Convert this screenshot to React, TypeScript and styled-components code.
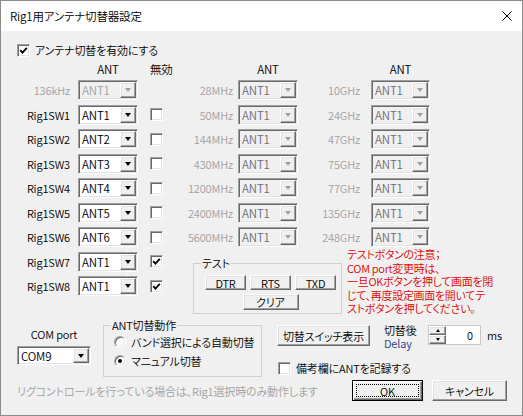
import styled, { createGlobalStyle, css } from "styled-components";

const GlobalStyle = createGlobalStyle`
  html, body { margin: 0; padding: 0; background: #f0f0f0; }
  body {
    font-family: "Noto Sans CJK JP", "Noto Sans", sans-serif;
    font-size: 11px;
    font-weight: 350;
    letter-spacing: -0.15px;
    color: #000;
    font-feature-settings: "palt";
  }
  *, *::before, *::after { box-sizing: border-box; }
`;

const sunken = css`
  border: 1px solid;
  border-color: #a0a0a0 #fff #fff #a0a0a0;
  box-shadow: inset 1px 1px 0 #696969, inset -1px -1px 0 #e3e3e3;
`;

const raised = css`
  border: 1px solid;
  border-color: #fff #696969 #696969 #fff;
  box-shadow: inset -1px -1px 0 #a0a0a0, inset 1px 1px 0 #e3e3e3;
`;

const swRows = [
  { label: "Rig1SW1", value: "ANT1", off: false },
  { label: "Rig1SW2", value: "ANT2", off: false },
  { label: "Rig1SW3", value: "ANT3", off: false },
  { label: "Rig1SW4", value: "ANT4", off: false },
  { label: "Rig1SW5", value: "ANT5", off: false },
  { label: "Rig1SW6", value: "ANT6", off: false },
  { label: "Rig1SW7", value: "ANT1", off: true },
  { label: "Rig1SW8", value: "ANT1", off: true },
];
const midBands = ["28MHz", "50MHz", "144MHz", "430MHz", "1200MHz", "2400MHz", "5600MHz"];
const highBands = ["10GHz", "24GHz", "47GHz", "75GHz", "77GHz", "135GHz", "248GHz"];

const Window = styled.div`
  width: 523px;
  height: 416px;
  border: 1px solid #8c8c8c;
  display: flex;
  flex-direction: column;
  background: #f0f0f0;
  overflow: hidden;
`;

const TitleBar = styled.div`
  height: 30px;
  flex: none;
  background: #fff;
  display: flex;
  align-items: center;
  justify-content: space-between;
  padding: 0 10px 0 9px;
`;

const Title = styled.span`
  font-size: 11.5px;
  line-height: 14px;
`;

const Body = styled.div`
  flex: 1;
  display: flex;
  flex-direction: column;
  padding: 0 15px 0 16px;
`;

const CheckRow = styled.label<{ $top?: number; $indent?: number }>`
  display: flex;
  align-items: center;
  gap: 5px;
  height: 14px;
  line-height: 14px;
  margin-top: ${(p) => p.$top ?? 0}px;
  margin-left: ${(p) => p.$indent ?? 0}px;
  white-space: nowrap;
`;

const CheckBoxFrame = styled.span`
  width: 13px;
  height: 13px;
  flex: none;
  background: #fff;
  display: flex;
  align-items: center;
  justify-content: center;
  ${sunken};
`;

function CheckBox({ checked }: { checked?: boolean }) {
  return (
    <CheckBoxFrame>
      {checked && (
        <svg width="9" height="9" viewBox="0 0 9 9">
          <path d="M1.2 4.2 L3.4 6.6 L7.8 1.8" fill="none" stroke="#000" strokeWidth="1.8" />
        </svg>
      )}
    </CheckBoxFrame>
  );
}

const BandGrid = styled.div`
  display: grid;
  grid-template-columns: 61px 60px 12px 30px 58px 60px 73px 59px 1fr;
  grid-template-rows: 18px repeat(9, 24.5px) 18px;
  margin-top: 3px;
`;

const Slot = styled.div<{ $row: number; $col: number }>`
  grid-row: ${(p) => p.$row};
  grid-column: ${(p) => p.$col};
  display: flex;
  align-items: center;
  min-width: 0;
`;

const ColHeader = styled(Slot)<{ $left?: boolean }>`
  justify-content: ${(p) => (p.$left ? "flex-start" : "center")};
  line-height: 14px;
  font-size: 11.5px;
`;

const BandLabel = styled(Slot)<{ $gap: number; $dim?: boolean }>`
  justify-content: flex-end;
  padding-right: ${(p) => p.$gap}px;
  color: ${(p) => (p.$dim ? "#a0a0a0" : "#000")};
  line-height: 14px;
  white-space: nowrap;
`;

type Tone = "normal" | "readonly" | "faint";

const ComboBox = styled.div<{ $w: number; $h: number; $disabled: boolean }>`
  width: ${(p) => p.$w}px;
  height: ${(p) => p.$h}px;
  padding: 1px;
  display: flex;
  flex: none;
  background: ${(p) => (p.$disabled ? "#f0f0f0" : "#fff")};
  ${sunken};
`;

const ComboValue = styled.span<{ $tone: Tone }>`
  flex: 1;
  padding-left: 2px;
  display: flex;
  align-items: center;
  font-size: 11.5px;
  color: ${(p) => (p.$tone === "normal" ? "#000" : p.$tone === "readonly" ? "#6d6d78" : "#a0a0a0")};
  white-space: nowrap;
`;

const DropButton = styled.span`
  width: 16px;
  flex: none;
  background: #f0f0f0;
  display: flex;
  align-items: center;
  justify-content: center;
  ${raised};
`;

const DropArrow = styled.span<{ $disabled: boolean }>`
  width: 0;
  height: 0;
  border-left: 3.5px solid transparent;
  border-right: 3.5px solid transparent;
  border-top: 4px solid ${(p) => (p.$disabled ? "#a0a0a0" : "#000")};
`;

function Combo({ value, tone = "normal", w = 60, h = 20 }: { value: string; tone?: Tone; w?: number; h?: number }) {
  const disabled = tone !== "normal";
  return (
    <ComboBox $w={w} $h={h} $disabled={disabled}>
      <ComboValue $tone={tone}>{value}</ComboValue>
      <DropButton>
        <DropArrow $disabled={disabled} />
      </DropButton>
    </ComboBox>
  );
}

const TestArea = styled.div`
  grid-row: 9 / 12;
  grid-column: 5 / -1;
  display: flex;
  align-items: flex-start;
  padding-left: 13px;
`;

const GroupBox = styled.fieldset<{ $w: number; $top: number; $left?: number }>`
  width: ${(p) => p.$w}px;
  margin: ${(p) => p.$top}px 0 0 ${(p) => p.$left ?? 0}px;
  padding: 0;
  border: 1px solid #d0d0d0;
  flex: none;
`;

const GroupTitle = styled.legend`
  margin-left: 7px;
  padding: 0 1px;
  line-height: 14px;
`;

const TestButtons = styled.div`
  display: flex;
  flex-wrap: wrap;
  justify-content: center;
  gap: 4px;
  padding: 5px 5px 3px 11px;
`;

const PushButton = styled.button<{ $w: number; $h: number }>`
  width: ${(p) => p.$w}px;
  height: ${(p) => p.$h}px;
  padding: 0;
  margin: 0;
  font: inherit;
  letter-spacing: inherit;
  line-height: 12px;
  color: #000;
  background: #f0f0f0;
  flex: none;
  white-space: nowrap;
  ${raised};
`;

const DefaultButton = styled(PushButton)`
  position: relative;
  border: 1px solid #000;
  box-shadow: inset 1px 1px 0 #fff, inset -1px -1px 0 #696969, inset -2px -2px 0 #a0a0a0;

  &::after {
    content: "";
    position: absolute;
    inset: 3px;
    border: 1px dotted #000;
  }
`;

const RedNote = styled.div`
  margin: -1.5px 0 0 5px;
  color: #e00000;
  line-height: 13.5px;
  letter-spacing: -0.3px;
  white-space: nowrap;
`;

const LowerRow = styled.div`
  display: flex;
  height: 60px;
`;

const ComColumn = styled.div`
  width: 74px;
  display: flex;
  flex-direction: column;
  align-items: center;
  padding-top: 10.5px;
  gap: 5px;
  line-height: 14px;
`;

const RadioList = styled.div`
  display: flex;
  flex-direction: column;
  padding: 0 0 1px 10px;
`;

const RadioRow = styled.label`
  display: flex;
  align-items: center;
  gap: 5px;
  height: 19px;
  white-space: nowrap;
`;

const RadioCircle = styled.span<{ $on?: boolean }>`
  width: 12px;
  height: 12px;
  border-radius: 50%;
  background: #fff;
  flex: none;
  display: flex;
  align-items: center;
  justify-content: center;
  ${sunken};

  &::after {
    content: "";
    width: 4px;
    height: 4px;
    border-radius: 50%;
    background: #000;
    display: ${(p) => (p.$on ? "block" : "none")};
  }
`;

const SideColumn = styled.div`
  display: flex;
  flex-direction: column;
  margin-left: 15px;
  padding-top: 8.5px;
`;

const DelayRow = styled.div`
  display: flex;
  align-items: flex-start;
`;

const DelayLabel = styled.div`
  width: 35px;
  margin: -1px 0 0 14px;
  line-height: 13px;
  white-space: nowrap;
`;

const DelayWord = styled.span`
  display: block;
  color: #233a8c;
`;

const Spin = styled.div`
  display: flex;
  width: 53px;
  height: 20px;
  margin-left: 9px;
  border: 1px solid #c8c8c8;
  background: #fff;
`;

const SpinButtons = styled.div`
  display: flex;
  flex-direction: column;
  width: 17px;
`;

const SpinButton = styled.span`
  flex: 1;
  background: #f0f0f0;
  display: flex;
  align-items: center;
  justify-content: center;
  ${raised};
`;

const SpinArrow = styled.span<{ $up?: boolean }>`
  width: 0;
  height: 0;
  border-left: 2.5px solid transparent;
  border-right: 2.5px solid transparent;
  ${(p) => (p.$up ? "border-bottom: 3px solid #000;" : "border-top: 3px solid #000;")}
`;

const SpinEdit = styled.span`
  flex: 1;
  text-align: right;
  padding-right: 7px;
  line-height: 18px;
`;

const Unit = styled.span`
  margin-left: 6px;
  line-height: 20px;
`;

const Footer = styled.div`
  display: flex;
  align-items: center;
  justify-content: space-between;
  height: 21px;
  margin-top: 3.5px;
`;

const FooterNote = styled.span`
  color: #a0a0a0;
  white-space: nowrap;
`;

const FooterButtons = styled.div`
  display: flex;
  gap: 9px;
`;

export default function App() {
  return (
    <>
      <GlobalStyle />
      <Window>
        <TitleBar>
          <Title>Rig1用アンテナ切替器設定</Title>
          <svg width="10" height="10" viewBox="0 0 10 10">
            <path d="M0.5 0.5 L9.5 9.5 M9.5 0.5 L0.5 9.5" stroke="#000" strokeWidth="1" />
          </svg>
        </TitleBar>
        <Body>
          <CheckRow $top={12}>
            <CheckBox checked />
            アンテナ切替を有効にする
          </CheckRow>

          <BandGrid>
            <ColHeader $row={1} $col={2}>ANT</ColHeader>
            <ColHeader $row={1} $col={4} $left>無効</ColHeader>
            <ColHeader $row={1} $col={6}>ANT</ColHeader>
            <ColHeader $row={1} $col={8}>ANT</ColHeader>

            <BandLabel $row={2} $col={1} $gap={8} $dim>136kHz</BandLabel>
            <Slot $row={2} $col={2}>
              <Combo value="ANT1" tone="faint" />
            </Slot>

            {swRows.map((r, i) => (
              <>
                <BandLabel key={r.label + "l"} $row={i + 3} $col={1} $gap={8}>{r.label}</BandLabel>
                <Slot key={r.label + "c"} $row={i + 3} $col={2}>
                  <Combo value={r.value} />
                </Slot>
                <Slot key={r.label + "x"} $row={i + 3} $col={4}>
                  <CheckBox checked={r.off} />
                </Slot>
              </>
            ))}

            {midBands.map((b, i) => (
              <>
                <BandLabel key={b + "l"} $row={i + 2} $col={5} $gap={5} $dim>{b}</BandLabel>
                <Slot key={b + "c"} $row={i + 2} $col={6}>
                  <Combo value="ANT1" tone="readonly" />
                </Slot>
              </>
            ))}

            {highBands.map((b, i) => (
              <>
                <BandLabel key={b + "l"} $row={i + 2} $col={7} $gap={11} $dim>{b}</BandLabel>
                <Slot key={b + "c"} $row={i + 2} $col={8}>
                  <Combo value="ANT1" tone="readonly" w={59} />
                </Slot>
              </>
            ))}

            <TestArea>
              <GroupBox $w={149} $top={6.5}>
                <GroupTitle>テスト</GroupTitle>
                <TestButtons>
                  <PushButton $w={41} $h={15}>DTR</PushButton>
                  <PushButton $w={41} $h={15}>RTS</PushButton>
                  <PushButton $w={41} $h={15}>TXD</PushButton>
                  <PushButton $w={56} $h={16}>クリア</PushButton>
                </TestButtons>
              </GroupBox>
              <RedNote>
                テストボタンの注意；<br />
                COM port変更時は、<br />
                一旦OKボタンを押して画面を閉<br />
                じて、再度設定画面を開いてテ<br />
                ストボタンを押してください。
              </RedNote>
            </TestArea>
          </BandGrid>

          <LowerRow>
            <ComColumn>
              COM port
              <Combo value="COM9" w={74} h={19} />
            </ComColumn>

            <GroupBox $w={159} $top={1.5} $left={12}>
              <GroupTitle>ANT切替動作</GroupTitle>
              <RadioList>
                <RadioRow>
                  <RadioCircle />
                  バンド選択による自動切替
                </RadioRow>
                <RadioRow>
                  <RadioCircle $on />
                  マニュアル切替
                </RadioRow>
              </RadioList>
            </GroupBox>

            <SideColumn>
              <DelayRow>
                <PushButton $w={93} $h={21}>切替スイッチ表示</PushButton>
                <DelayLabel>
                  切替後
                  <DelayWord>Delay</DelayWord>
                </DelayLabel>
                <Spin>
                  <SpinButtons>
                    <SpinButton><SpinArrow $up /></SpinButton>
                    <SpinButton><SpinArrow /></SpinButton>
                  </SpinButtons>
                  <SpinEdit>0</SpinEdit>
                </Spin>
                <Unit>ms</Unit>
              </DelayRow>
              <CheckRow $top={11} $indent={1}>
                <CheckBox />
                備考欄にANTを記録する
              </CheckRow>
            </SideColumn>
          </LowerRow>

          <Footer>
            <FooterNote>リグコントロールを行っている場合は、Rig1選択時のみ動作します</FooterNote>
            <FooterButtons>
              <DefaultButton $w={71} $h={21}>OK</DefaultButton>
              <PushButton $w={75} $h={21}>キャンセル</PushButton>
            </FooterButtons>
          </Footer>
        </Body>
      </Window>
    </>
  );
}
